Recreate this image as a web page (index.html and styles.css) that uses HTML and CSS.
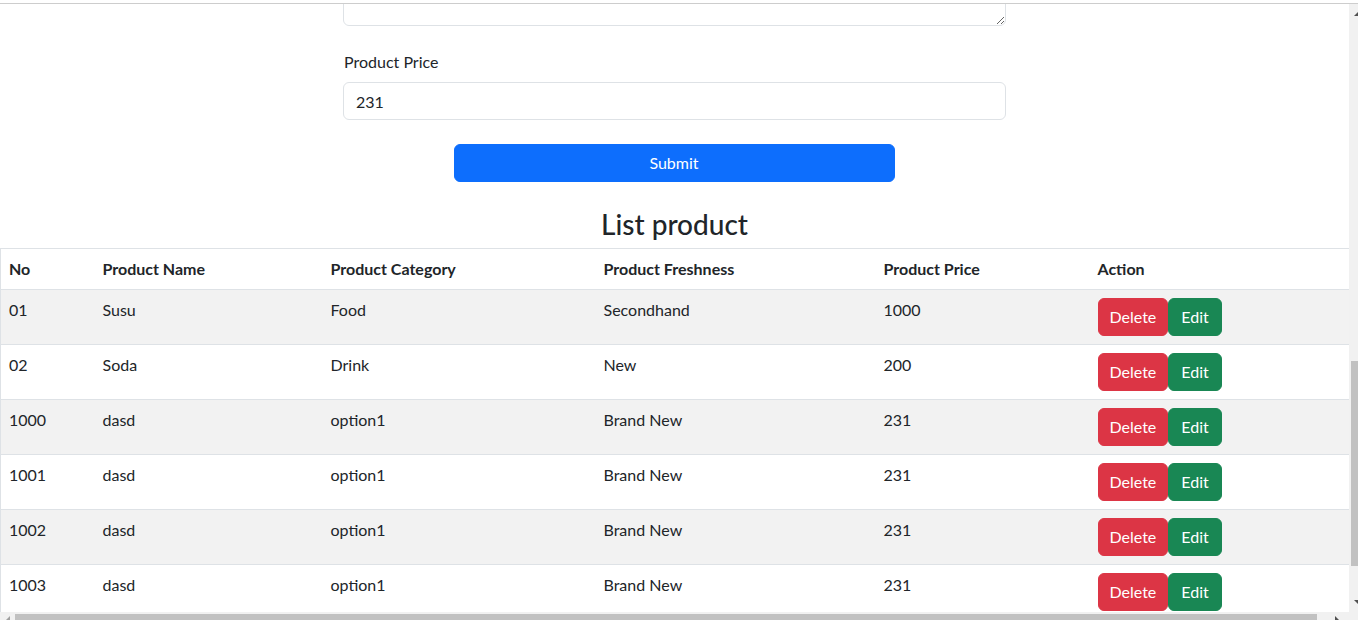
FILE: index.html
```html
<!DOCTYPE html>
<html lang="en">
<head>
<meta charset="utf-8">
<title>List product</title>
<link rel="stylesheet" href="styles.css">
</head>
<body>
<div class="frame-top"></div>
<div class="window">
  <div class="viewport">
    <div class="content">
      <form class="product-form">
        <div class="textarea-clip"><textarea class="form-control textarea"></textarea></div>
        <label class="form-label">Product Price</label>
        <input class="form-control" type="text" value="231">
        <div class="submit-wrap"><button type="button" class="btn btn-primary submit">Submit</button></div>
      </form>
      <h3 class="title">List product</h3>
      <table class="table">
        <colgroup>
          <col class="c1"><col class="c2"><col class="c3"><col class="c4"><col class="c5"><col class="c6">
        </colgroup>
        <thead>
          <tr><th>No</th><th>Product Name</th><th>Product Category</th><th>Product Freshness</th><th>Product Price</th><th>Action</th></tr>
        </thead>
        <tbody>
          <tr class="striped"><td>01</td><td>Susu</td><td>Food</td><td>Secondhand</td><td>1000</td><td><div class="actions"><button class="btn btn-danger">Delete</button><button class="btn btn-success">Edit</button></div></td></tr>
          <tr><td>02</td><td>Soda</td><td>Drink</td><td>New</td><td>200</td><td><div class="actions"><button class="btn btn-danger">Delete</button><button class="btn btn-success">Edit</button></div></td></tr>
          <tr class="striped"><td>1000</td><td>dasd</td><td>option1</td><td>Brand New</td><td>231</td><td><div class="actions"><button class="btn btn-danger">Delete</button><button class="btn btn-success">Edit</button></div></td></tr>
          <tr><td>1001</td><td>dasd</td><td>option1</td><td>Brand New</td><td>231</td><td><div class="actions"><button class="btn btn-danger">Delete</button><button class="btn btn-success">Edit</button></div></td></tr>
          <tr class="striped"><td>1002</td><td>dasd</td><td>option1</td><td>Brand New</td><td>231</td><td><div class="actions"><button class="btn btn-danger">Delete</button><button class="btn btn-success">Edit</button></div></td></tr>
          <tr><td>1003</td><td>dasd</td><td>option1</td><td>Brand New</td><td>231</td><td><div class="actions"><button class="btn btn-danger">Delete</button><button class="btn btn-success">Edit</button></div></td></tr>
        </tbody>
      </table>
    </div>
    <div class="vscroll">
      <span class="arrow-up"></span>
      <div class="vtrack"><div class="vthumb"></div></div>
      <span class="arrow-down"></span>
    </div>
  </div>
  <div class="hscroll">
    <span class="arrow-left"></span>
    <div class="htrack"><div class="hthumb"></div></div>
    <span class="arrow-right"></span>
    <span class="corner"></span>
  </div>
</div>
</body>
</html>
```

FILE: styles.css
```css
* { box-sizing: border-box; }
html, body { margin: 0; padding: 0; }
body {
  width: 1358px;
  height: 620px;
  overflow: hidden;
  background: #fff;
  color: #212529;
  font-family: Lato, "Noto Sans", sans-serif;
  font-size: 16px;
  line-height: 1.5;
}
.frame-top {
  height: 4px;
  border-bottom: 1px solid #cdcdcd;
  background: #fff;
}
.window {
  display: flex;
  flex-direction: column;
  height: 616px;
}
.viewport {
  display: flex;
  height: 608px;
}
.content {
  width: 1349px;
  height: 608px;
  overflow: hidden;
}
.product-form {
  width: 663px;
  margin: 0 0 0 343px;
}
.textarea-clip {
  height: 22px;
  overflow: hidden;
  display: flex;
  flex-direction: column;
  justify-content: flex-end;
}
.form-control {
  display: block;
  width: 100%;
  height: 38px;
  padding: 6px 12px;
  font: inherit;
  color: #212529;
  border: 1px solid #dee2e6;
  border-radius: 6px;
  background: #fff;
}
.textarea {
  height: 60px;
  flex-shrink: 0;
  resize: vertical;
}
.form-label {
  display: block;
  margin: 24px 0 8px 1px;
}
.submit-wrap {
  display: flex;
  justify-content: center;
  padding: 24px 0 0 0;
}
.btn {
  display: inline-block;
  font: inherit;
  line-height: 24px;
  padding: 6px 12px;
  border: 1px solid transparent;
  border-radius: 6px;
  color: #fff;
  cursor: pointer;
}
.btn-primary { background: #0d6efd; border-color: #0d6efd; }
.btn-danger { background: #dc3545; border-color: #dc3545; padding: 6px 11px; }
.btn-success { background: #198754; border-color: #198754; }
.submit {
  width: 441px;
  height: 38px;
  margin-right: 1px;
}
.title {
  margin: 26px 0 6px 0;
  text-align: center;
  font-size: 28px;
  font-weight: 500;
  line-height: 1.2;
}
.table {
  width: 1349px;
  border-collapse: collapse;
  table-layout: fixed;
  border: 1px solid #dee2e6;
}
.c1 { width: 94px; }
.c2 { width: 228px; }
.c3 { width: 273px; }
.c4 { width: 280px; }
.c5 { width: 214px; }
.c6 { width: 260px; }
.table th, .table td {
  padding: 8px;
  text-align: left;
  vertical-align: top;
  border-bottom: 1px solid #dee2e6;
}
.actions { display: flex; }
.table th { font-weight: 700; }
.table tr.striped td { background: #f2f2f2; }
.vscroll {
  width: 9px;
  background: #f1f1f1;
  display: flex;
  flex-direction: column;
  align-items: flex-end;
}
.arrow-up, .arrow-down {
  display: block;
  width: 0; height: 0;
  margin: 8px 0;
  border-left: 4px solid transparent;
}
.arrow-up { border-bottom: 4px solid #505050; }
.arrow-down { border-top: 4px solid #505050; }
.vtrack {
  flex: 1;
  width: 7px;
  padding-top: 337px;
}
.vthumb {
  height: 205px;
  background: #c1c1c1;
}
.hscroll {
  display: flex;
  align-items: center;
  height: 8px;
  background: #f1f1f1;
}
.arrow-left, .arrow-right {
  display: block;
  width: 0; height: 0;
}
.arrow-left { margin: 0 4px 0 6px; border-top: 4px solid transparent; border-right: 4px solid #a0a0a0; align-self: flex-end; }
.arrow-right { margin: 0 8px 0 18px; border-top: 4px solid transparent; border-left: 4px solid #505050; align-self: flex-end; }
.htrack {
  width: 1302px;
  height: 8px;
  padding-top: 2px;
  margin-left: 1px;
}
.hthumb {
  height: 6px;
  background: #c1c1c1;
}
.corner {
  flex: 1;
  height: 8px;
  background: #f1f1f1;
}
```
